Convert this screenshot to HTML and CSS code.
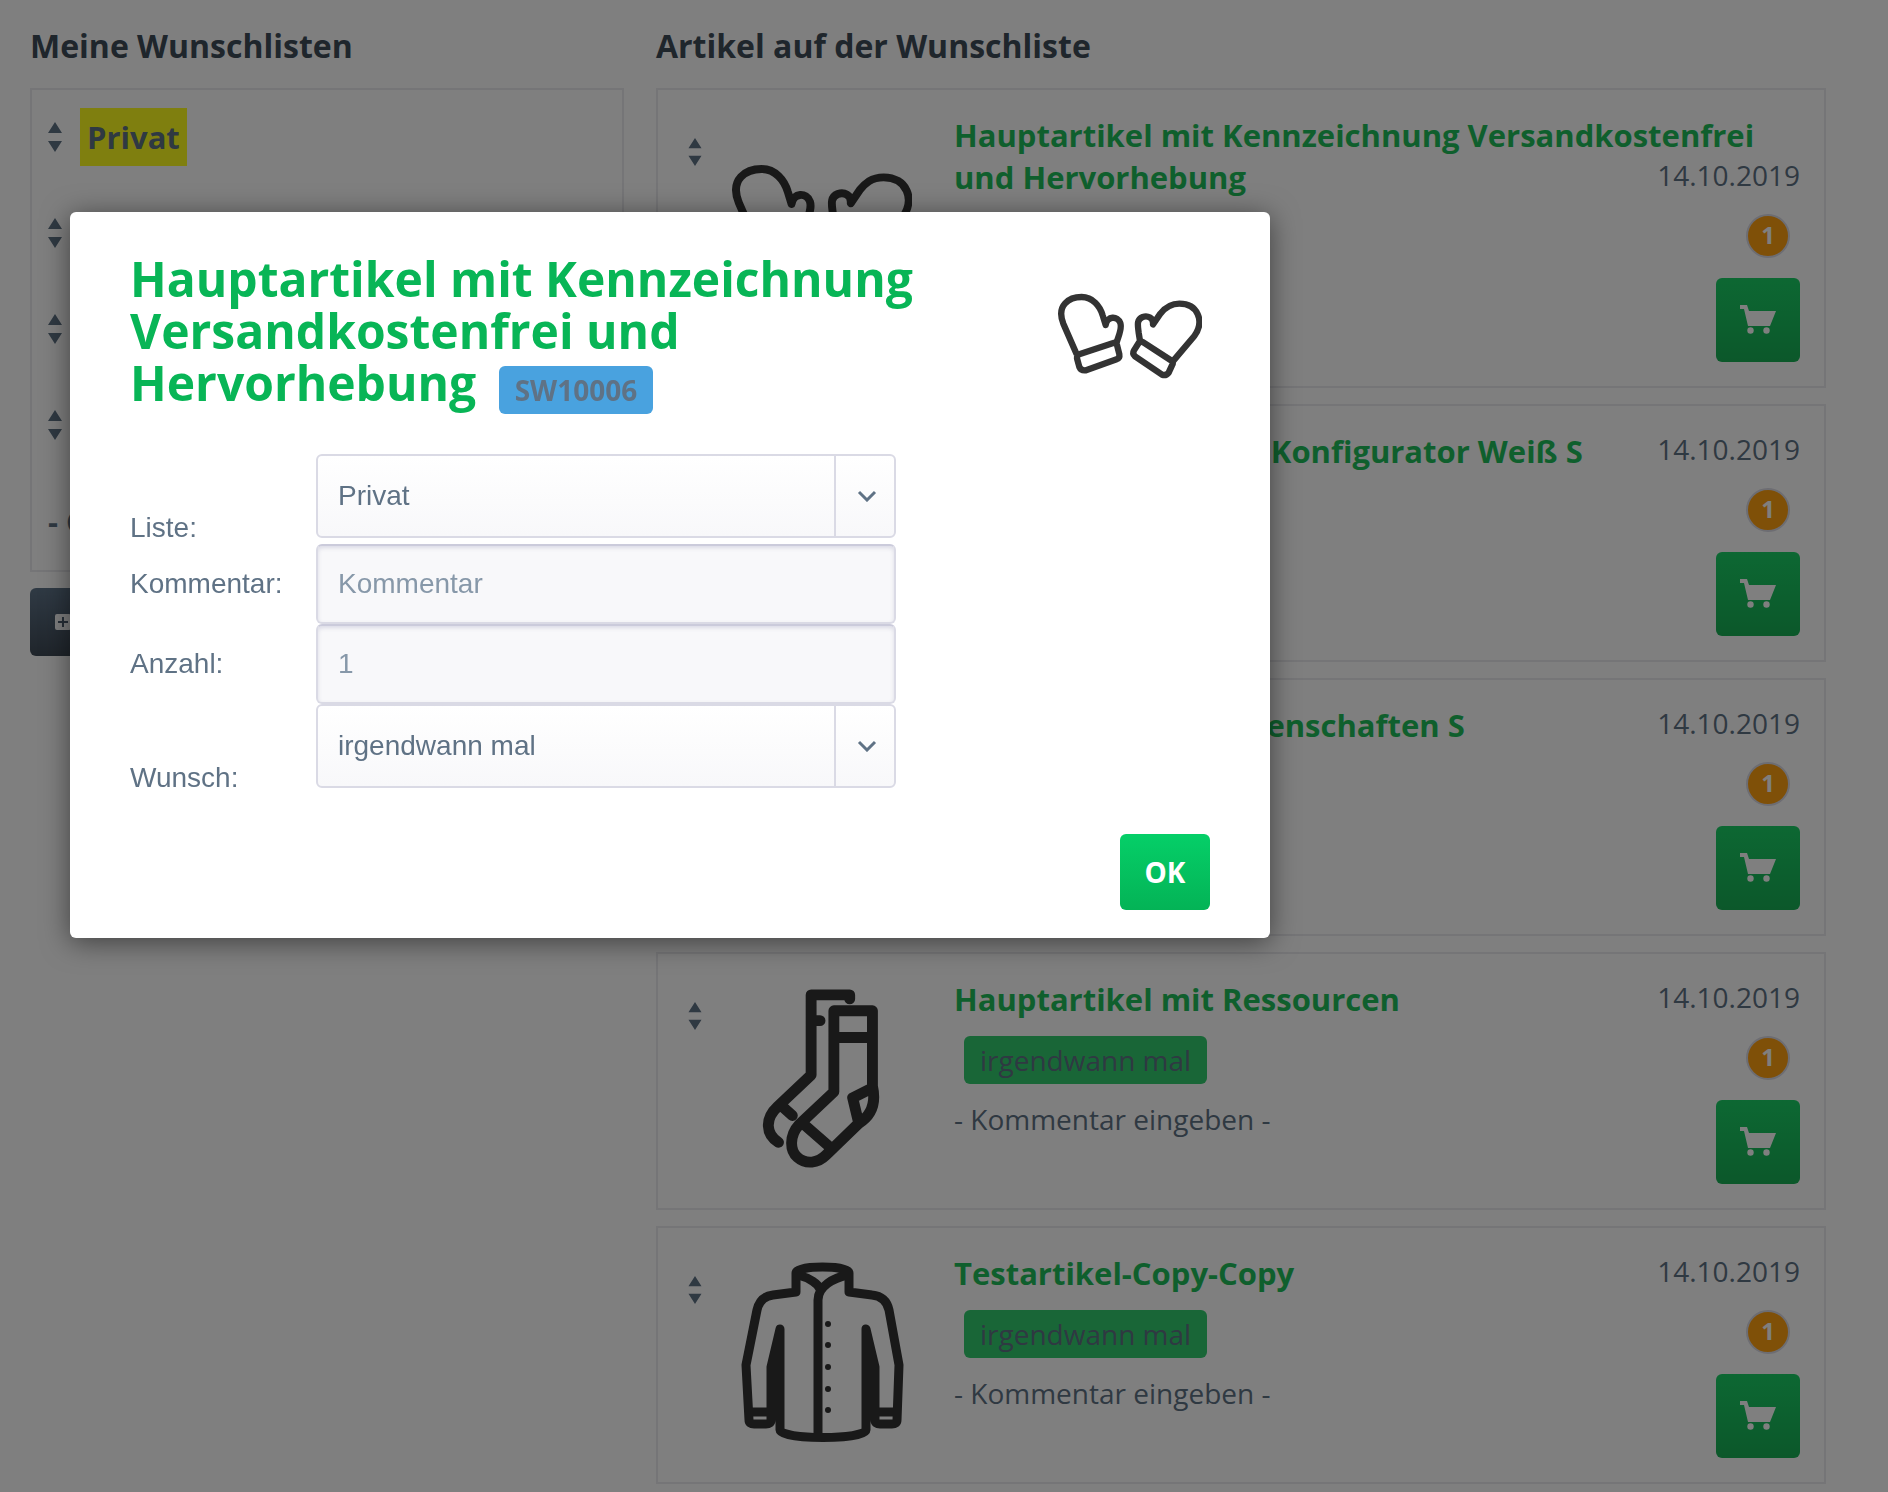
FILE: index.html
```html
<!DOCTYPE html>
<html lang="de">
<head>
<meta charset="utf-8">
<title>Meine Wunschlisten</title>
<meta name="viewport" content="width=device-width, initial-scale=1">
<link rel="stylesheet" href="styles.css">
</head>
<body>
<svg class="sprite" aria-hidden="true">
  <symbol id="sort" viewBox="0 0 14 30"><path d="M7 0l7 11H0zM7 30l7-11H0z" fill="currentColor"/></symbol>
  <symbol id="cart" viewBox="0 0 36 30"><path d="M0 0h7l2 6h27l-6 15H8L4 4H0z" fill="currentColor"/><circle cx="10.500" cy="25.500" r="3.200" fill="currentColor"/><circle cx="26.500" cy="25.500" r="3.200" fill="currentColor"/></symbol>
  <symbol id="chevron" viewBox="0 0 20 12"><path d="M2 2l8 8 8-8" fill="none" stroke="currentColor" stroke-width="3"/></symbol>
  <symbol id="plus" viewBox="0 0 16 16"><path d="M2 0h12a2 2 0 0 1 2 2v12a2 2 0 0 1-2 2H2a2 2 0 0 1-2-2V2a2 2 0 0 1 2-2zM7 3v4H3v2h4v4h2V9h4V7H9V3z" fill="currentColor" fill-rule="evenodd"/></symbol>
  <symbol id="mittens" viewBox="56 -30 432 432">
    <g fill="none" stroke="currentColor" stroke-width="19" stroke-linejoin="round">
      <path d="M112 250L72 158C50 102 90 78 127 78C160 78 182 105 190 133L199 162C203 134 235 134 243 156C249 174 237 195 232 214"/>
      <path d="M122 249L222 216Q230 213 233 222L240 250Q242 262 232 265L140 298Q125 300 120 288L113 262Q112 252 122 249Z"/>
      <path d="M403 268L465 195C497 150 475 98 420 98C390 98 375 113 363 128L341 160C343 140 325 133 310 138C290 146 296 165 298 185L302 210"/>
      <path d="M312 214L398 270Q403 275 398 283L388 305Q380 315 368 311L287 256Q278 248 284 238L298 216Q304 210 312 214Z"/>
    </g>
  </symbol>
  <symbol id="socks" viewBox="0 0 180 182">
    <g fill="none" stroke="currentColor" stroke-width="11" stroke-linejoin="round" stroke-linecap="round">
      <path d="M118 11V7H79V88L45 120C32 132 33 148 46 156M79 33H88M49 119L60 129"/>
      <path d="M141 99V23H102V105L67 138C56 150 58 165 65 171C74 179 86 177 94 169L127 137C140 129 145 117 141 99M102 50H141M141 101L121 111L127 136M73 139L97 160"/>
    </g>
  </symbol>
  <symbol id="jacket" viewBox="0 0 180 180">
    <g fill="none" stroke="currentColor" stroke-width="9" stroke-linejoin="round" stroke-linecap="round">
      <path d="M64 30V11C64 3 117 3 117 11V30L140 33C150 34 155 39 157 48L167 103L165 158Q165 162 160 162H148Q143 162 143 158V105L134 67V168C134 178 48 178 48 168V67L39 105V158Q39 162 34 162H22Q17 162 17 158L14 103L25 48C27 39 32 34 41 33Z" stroke-linecap="butt"/>
      <path d="M66 13C78 16 86 22 88 27M115 13C102 16 86 24 86 38V174M18 150H38M144 150H164"/>
    </g>
    <path d="M48 67V115L39 105zM134 67V115L143 105z" fill="currentColor"/>
    <g fill="currentColor"><circle cx="96" cy="62" r="3"/><circle cx="96" cy="83" r="3"/><circle cx="96" cy="105" r="3"/><circle cx="96" cy="127" r="3"/><circle cx="96" cy="148" r="3"/></g>
  </symbol>
</svg>

<main class="page">
  <section class="lists">
    <h2 class="heading">Meine Wunschlisten</h2>
    <ul class="list-panel">
      <li class="list-row"><svg class="sort"><use href="#sort"/></svg><a class="list-link active" href="#">Privat</a></li>
      <li class="list-row"><svg class="sort"><use href="#sort"/></svg></li>
      <li class="list-row"><svg class="sort"><use href="#sort"/></svg></li>
      <li class="list-row"><svg class="sort"><use href="#sort"/></svg></li>
      <li class="list-row">- Gruppe anlegen -</li>
    </ul>
    <button class="new-list" type="button" aria-label="Neue Liste"><svg class="plus"><use href="#plus"/></svg></button>
  </section>

  <section class="articles">
    <h2 class="heading">Artikel auf der Wunschliste</h2>
    <div class="cards">
      <article class="card">
        <svg class="sort small"><use href="#sort"/></svg>
        <svg class="picture"><use href="#mittens"/></svg>
        <div class="content">
          <div class="top"><a class="title" href="#">Hauptartikel mit Kennzeichnung Versandkostenfrei und Hervorhebung</a><time class="date">14.10.2019</time></div>
          <div class="details">
            <div class="notes"></div>
            <div class="actions"><span class="count">1</span><button class="cart" type="button" aria-label="In den Warenkorb"><svg class="cart-icon"><use href="#cart"/></svg></button></div>
          </div>
        </div>
      </article>
      <article class="card">
        <svg class="sort small"><use href="#sort"/></svg>
        <svg class="picture"></svg>
        <div class="content">
          <div class="top"><a class="title" href="#">Hauptartikel mit 3D Konfigurator Weiß S</a><time class="date">14.10.2019</time></div>
          <div class="details">
            <div class="notes"></div>
            <div class="actions"><span class="count">1</span><button class="cart" type="button" aria-label="In den Warenkorb"><svg class="cart-icon"><use href="#cart"/></svg></button></div>
          </div>
        </div>
      </article>
      <article class="card">
        <svg class="sort small"><use href="#sort"/></svg>
        <svg class="picture"></svg>
        <div class="content">
          <div class="top"><a class="title" href="#">Hauptartikel mit Eigenschaften S</a><time class="date">14.10.2019</time></div>
          <div class="details">
            <div class="notes"></div>
            <div class="actions"><span class="count">1</span><button class="cart" type="button" aria-label="In den Warenkorb"><svg class="cart-icon"><use href="#cart"/></svg></button></div>
          </div>
        </div>
      </article>
      <article class="card">
        <svg class="sort small"><use href="#sort"/></svg>
        <svg class="picture"><use href="#socks"/></svg>
        <div class="content">
          <div class="top"><a class="title" href="#">Hauptartikel mit Ressourcen</a><time class="date">14.10.2019</time></div>
          <div class="details">
            <div class="notes"><span class="tag">irgendwann mal</span><p class="comment">- Kommentar eingeben -</p></div>
            <div class="actions"><span class="count">1</span><button class="cart" type="button" aria-label="In den Warenkorb"><svg class="cart-icon"><use href="#cart"/></svg></button></div>
          </div>
        </div>
      </article>
      <article class="card">
        <svg class="sort small"><use href="#sort"/></svg>
        <svg class="picture"><use href="#jacket"/></svg>
        <div class="content">
          <div class="top"><a class="title" href="#">Testartikel-Copy-Copy</a><time class="date">14.10.2019</time></div>
          <div class="details">
            <div class="notes"><span class="tag">irgendwann mal</span><p class="comment">- Kommentar eingeben -</p></div>
            <div class="actions"><span class="count">1</span><button class="cart" type="button" aria-label="In den Warenkorb"><svg class="cart-icon"><use href="#cart"/></svg></button></div>
          </div>
        </div>
      </article>
    </div>
  </section>
</main>

<div class="overlay"></div>

<form class="modal" role="dialog" aria-labelledby="modal-title">
  <header class="modal-head">
    <h1 class="modal-title" id="modal-title">Hauptartikel mit Kennzeichnung Versandkostenfrei und Hervorhebung <span class="tag order-number">SW10006</span></h1>
    <svg class="modal-picture"><use href="#mittens"/></svg>
  </header>
  <div class="fields">
    <label class="label low" for="liste">Liste:</label>
    <div class="select-box">
      <select class="select" id="liste"><option>Privat</option></select>
      <span class="select-arrow"><svg class="chevron"><use href="#chevron"/></svg></span>
    </div>
    <label class="label" for="kommentar">Kommentar:</label>
    <input class="input" id="kommentar" type="text" placeholder="Kommentar">
    <label class="label" for="anzahl">Anzahl:</label>
    <input class="input" id="anzahl" type="text" value="1">
    <label class="label low" for="wunsch">Wunsch:</label>
    <div class="select-box">
      <select class="select" id="wunsch"><option>irgendwann mal</option></select>
      <span class="select-arrow"><svg class="chevron"><use href="#chevron"/></svg></span>
    </div>
  </div>
  <button class="ok" type="button">OK</button>
</form>
</body>
</html>
```
FILE: styles.css
```css
* { box-sizing: border-box; }

body {
  margin: 0;
  background: #fff;
  color: #5f7285;
  font-family: "Open Sans", sans-serif;
  font-size: 28px;
  line-height: 38px;
}

h1, h2, p, ul { margin: 0; padding: 0; }
a { color: inherit; text-decoration: none; }
svg { display: block; flex: none; }
button { border: 0; border-radius: 6px; padding: 0; font: inherit; }

.sprite { position: absolute; width: 0; height: 0; }

.page {
  display: grid;
  grid-template-columns: 33fr 65fr;
  align-items: start;
  gap: 32px;
  padding: 24px 62px 8px 30px;
}

.heading {
  margin-bottom: 20px;
  color: #3f4c58;
  font-size: 32px;
  line-height: 44px;
}

/* wish lists */
.list-panel {
  border: 2px solid #eaeaee;
  list-style: none;
  font-size: 31px;
  font-weight: 700;
}

.list-row {
  display: flex;
  align-items: center;
  gap: 18px;
  height: 96px;
  padding: 0 0 2px 16px;
}

.sort { width: 14px; height: 30px; }
.sort.small { width: 14px; height: 28px; }

.list-link { padding: 10px 7px; }
.list-link.active { background: #ffff1e; }

.new-list {
  display: flex;
  align-items: center;
  width: 200px;
  height: 68px;
  margin-top: 16px;
  padding-left: 25px;
  background: linear-gradient(#5f7489, #3f4a56);
  color: #fff;
}

.plus { width: 16px; height: 16px; }

/* articles */
.cards { display: grid; gap: 16px; }

.card {
  display: flex;
  align-items: flex-start;
  padding: 24px;
  border: 2px solid #eaeaee;
}

.card .sort { margin: 24px 30px 0 6px; }
.picture { width: 180px; height: 180px; margin: 10px 42px 0 0; color: #333; }
.content { flex: 1; min-width: 0; }

.top {
  display: flow-root;
  margin-bottom: 16px;
  font-size: 31px;
  font-weight: 700;
  line-height: 42px;
}

.title { color: #1ebe5a; }
.date { float: right; font-size: 28px; font-weight: 400; line-height: 38px; }

.details { display: flex; justify-content: space-between; }

.tag {
  display: inline-block;
  margin-left: 10px;
  padding: 5px 16px;
  border-radius: 6px;
  background: #32cd6e;
  line-height: 38px;
}

.notes { display: flex; flex-direction: column; align-items: flex-start; gap: 16px; }

.actions { display: flex; flex-direction: column; align-items: flex-end; gap: 20px; }

.count {
  width: 44px;
  height: 44px;
  margin-right: 10px;
  border: 2px solid #dadae5;
  border-radius: 50%;
  background: #ffa010;
  color: #fff;
  font-size: 24px;
  font-weight: 700;
  line-height: 38px;
  text-align: center;
}

.cart {
  display: grid;
  place-items: center;
  width: 84px;
  height: 84px;
  background: linear-gradient(#1ad066, #18b055);
  color: #fff;
}

.cart-icon { width: 36px; height: 30px; }

/* dialog */
.overlay { position: fixed; inset: 0; background: rgba(0, 0, 0, .5); }

.modal {
  position: absolute;
  top: 212px;
  left: 70px;
  display: flex;
  flex-direction: column;
  width: 1200px;
  max-width: calc(100% - 140px);
  padding: 41px 60px 28px;
  border-radius: 6px;
  background: #fff;
  box-shadow: 0 4px 28px rgba(0, 0, 0, .5);
}

.modal-head { display: flex; align-items: flex-start; gap: 40px; }
.modal-title { flex: 1; color: #08b556; font-size: 48px; line-height: 52px; }
.modal-picture { width: 160px; height: 160px; padding: 8px; color: #333; }

.order-number { background: #49a2df; color: #5f7285; font-size: 28px; }

.fields {
  display: grid;
  grid-template-columns: 186px minmax(0, 580px);
  align-items: center;
  margin: 40px 0;
  font-family: "Liberation Sans", Arial, sans-serif;
  line-height: 32px;
}

.label.low { align-self: end; }

.select-box {
  display: grid;
  grid-template-columns: 1fr 60px;
  height: 84px;
  margin-bottom: 6px;
  border: 2px solid #dadae5;
  border-radius: 6px;
  background: linear-gradient(#fff, #f8f8fa);
}

.select {
  grid-area: 1 / 1 / 2 / 3;
  appearance: none;
  width: 100%;
  padding: 0 80px 0 20px;
  border: 0;
  background: transparent;
  color: inherit;
  font: inherit;
}

.select-arrow {
  grid-area: 1 / 2;
  display: grid;
  place-items: center;
  padding-left: 4px;
  border-left: 2px solid #dadae5;
  pointer-events: none;
}

.chevron { width: 20px; height: 12px; }

.input {
  width: 100%;
  height: 80px;
  padding: 0 20px;
  border: 2px solid #dadae5;
  border-top-color: #cbcbdb;
  border-radius: 6px;
  background: #f8f8fa;
  box-shadow: inset 0 2px 4px #dadae5;
  color: #8798a9;
  font: inherit;
}

.input::placeholder { color: #8798a9; opacity: 1; }

.ok {
  align-self: flex-end;
  width: 90px;
  height: 76px;
  background: linear-gradient(#05cf68, #04b356);
  color: #fff;
  font-weight: 700;
}
```
